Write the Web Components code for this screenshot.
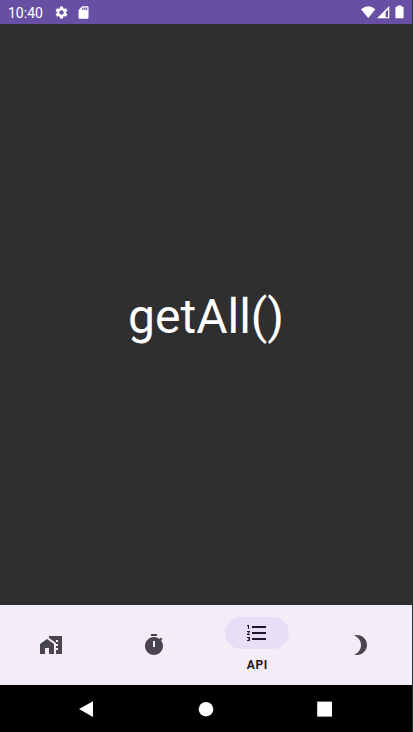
<!DOCTYPE html>
<html lang="en">
<head>
<meta charset="utf-8">
<title>getAll()</title>
<style>
body{margin:0;background:#2f2f2f;font-family:Roboto,"Liberation Sans",sans-serif;overflow:hidden}
</style>
</head>
<body>
<phone-screen>
  <status-bar slot="status" time="10:40"></status-bar>
  <big-title>getAll()</big-title>
  <tab-bar slot="tabs">
    <tab-item><svg slot="icon" viewBox="0 0 24 24"><path d="M1 11v10h5v-6h4v6h5V11L8 6z"/><path d="M10 3v1.97l7 5V11h2v2h-2v2h2v2h-2v4h6V3H10zm9 6h-2V7h2v2z"/></svg></tab-item>
    <tab-item><svg slot="icon" viewBox="0 0 24 24"><path d="M15 1H9v2h6V1zm4.03 6.39l1.42-1.42c-.43-.51-.9-.99-1.41-1.41l-1.42 1.42C16.07 4.74 14.12 4 12 4c-4.97 0-9 4.03-9 9s4.02 9 9 9 9-4.03 9-9c0-2.12-.74-4.07-1.97-5.61zM13 14h-2V8h2v6z"/></svg></tab-item>
    <tab-item active><svg slot="icon" viewBox="0 0 24 24"><path d="M2 17h2v.5H3v1h1v.5H2v1h3v-4H2v1zm1-9h1V4H2v1h1v3zm-1 3h1.8L2 13.1v.9h3v-1H3.2L5 10.9V10H2v1zm5-6v2h14V5H7zm0 14h14v-2H7v2zm0-6h14v-2H7v2z"/></svg>API</tab-item>
    <tab-item><svg slot="icon" viewBox="0 0 24 24"><path d="M9 2c-1.05 0-2.05.16-3 .46 4.06 1.27 7 5.06 7 9.54 0 4.48-2.94 8.27-7 9.54.95.3 1.95.46 3 .46 5.52 0 10-4.48 10-10S14.52 2 9 2z"/></svg></tab-item>
  </tab-bar>
  <system-nav slot="system"></system-nav>
</phone-screen>
<script>
const define = (name, html, setup) => {
  const template = document.createElement('template');
  template.innerHTML = html;
  customElements.define(name, class extends HTMLElement {
    constructor() {
      super();
      this.attachShadow({mode: 'open'}).append(template.content.cloneNode(true));
    }
    connectedCallback() { if (setup) setup(this); }
  });
};

define('phone-screen', `
<style>
:host{display:flex;flex-direction:column;width:412px;height:732px}
main{flex:1;display:flex;align-items:center;justify-content:center}
</style>
<slot name="status"></slot><main><slot></slot></main><slot name="tabs"></slot><slot name="system"></slot>`);

define('status-bar', `
<style>
:host{display:flex;align-items:center;box-sizing:border-box;height:24px;padding:0 6px 0 8px;background:#6750a4;color:#fff}
time{font-size:14px;line-height:24px;width:46px;padding-top:1px;box-sizing:border-box;height:24px}
svg{display:block;fill:#fff}
.sd{margin-left:7px}
.right{display:flex;align-items:center;margin-left:auto}
.battery{margin-left:1px}
</style>
<time></time>
<svg width="15" height="15" viewBox="0 0 24 24"><path d="M19.14 12.94c.04-.3.06-.61.06-.94 0-.32-.02-.64-.07-.94l2.03-1.58c.18-.14.23-.41.12-.61l-1.92-3.32c-.12-.22-.37-.29-.59-.22l-2.39.96c-.5-.38-1.03-.7-1.62-.94l-.36-2.54c-.04-.24-.24-.41-.48-.41h-3.84c-.24 0-.43.17-.47.41l-.36 2.54c-.59.24-1.13.57-1.62.94l-2.39-.96c-.22-.08-.47 0-.59.22L2.74 8.87c-.12.21-.08.47.12.61l2.03 1.58c-.05.3-.09.63-.09.94s.02.64.07.94l-2.03 1.58c-.18.14-.23.41-.12.61l1.92 3.32c.12.22.37.29.59.22l2.39-.96c.5.38 1.03.7 1.62.94l.36 2.54c.05.24.24.41.48.41h3.84c.24 0 .44-.17.47-.41l.36-2.54c.59-.24 1.13-.56 1.62-.94l2.39.96c.22.08.47 0 .59-.22l1.92-3.32c.12-.22.07-.47-.12-.61l-2.01-1.58zM12 15.6c-1.98 0-3.6-1.62-3.6-3.6s1.62-3.6 3.6-3.6 3.6 1.62 3.6 3.6-1.62 3.6-3.6 3.6z"/></svg>
<svg class="sd" width="15" height="15" viewBox="0 0 24 24"><path d="M18 2h-8L4.02 8 4 20c0 1.1.9 2 2 2h12c1.1 0 2-.9 2-2V4c0-1.1-.9-2-2-2zm-6 6h-2V4h2v4zm3 0h-2V4h2v4zm3 0h-2V4h2v4z"/></svg>
<div class="right">
<svg width="15" height="14" viewBox="0 0 15 14"><path d="M7.2 13 0 4.2Q7.2-1.6 14.4 4.2z"/></svg>
<svg width="15" height="14" viewBox="0 0 15 14"><path fill-rule="evenodd" d="M13.3 1v12.2H1zM12 4.4 9.6 6.8v5.4H12z"/></svg>
<svg class="battery" width="14" height="14" viewBox="0 0 14 14"><path d="M5.6.5h3.8v1.2H11q.6 0 .6.6v10.4q0 .6-.6.6H4q-.6 0-.6-.6V2.3q0-.6.6-.6h1.6z"/></svg>
</div>`, el => { el.shadowRoot.querySelector('time').textContent = el.getAttribute('time'); });

define('big-title', `
<style>:host{display:block;color:#fff;font-size:48px;line-height:56px;padding-top:5px}</style><slot></slot>`);

define('tab-bar', `
<style>:host{display:grid;box-sizing:border-box;grid-template-columns:repeat(4,1fr);height:80px;padding-right:1px;background:#f3edf7}</style><slot></slot>`);

define('tab-item', `
<style>
:host{display:flex;flex-direction:column;align-items:center;justify-content:center;color:#49454f}
.pill{display:flex;align-items:center;justify-content:center;width:64px;height:32px;border-radius:16px}
::slotted(svg){display:block;width:24px;height:24px;fill:currentColor}
.label{display:none;font-size:12px;font-weight:700;line-height:16px;letter-spacing:.6px;margin-top:8px;padding-left:1px}
:host([active]){justify-content:flex-start;padding-top:12px;color:#1d192b}
:host([active]) .pill{background:#e8def8}
:host([active]) .label{display:block;color:#1c1b1f}
</style>
<div class="pill"><slot name="icon"></slot></div><div class="label"><slot></slot></div>`);

define('system-nav', `
<style>
:host{display:flex;align-items:center;justify-content:center;gap:95px;height:47px;background:#000}
svg{display:block;width:24px;height:24px;fill:#fff}
</style>
<svg viewBox="0 0 24 24"><path d="M18 4.2v15.8L4 12.1z"/></svg>
<svg viewBox="0 0 24 24"><circle cx="12" cy="12.2" r="7.3"/></svg>
<svg viewBox="0 0 24 24"><path d="M4.2 4.6h14.8v15H4.2z"/></svg>`);
</script>
</body>
</html>
